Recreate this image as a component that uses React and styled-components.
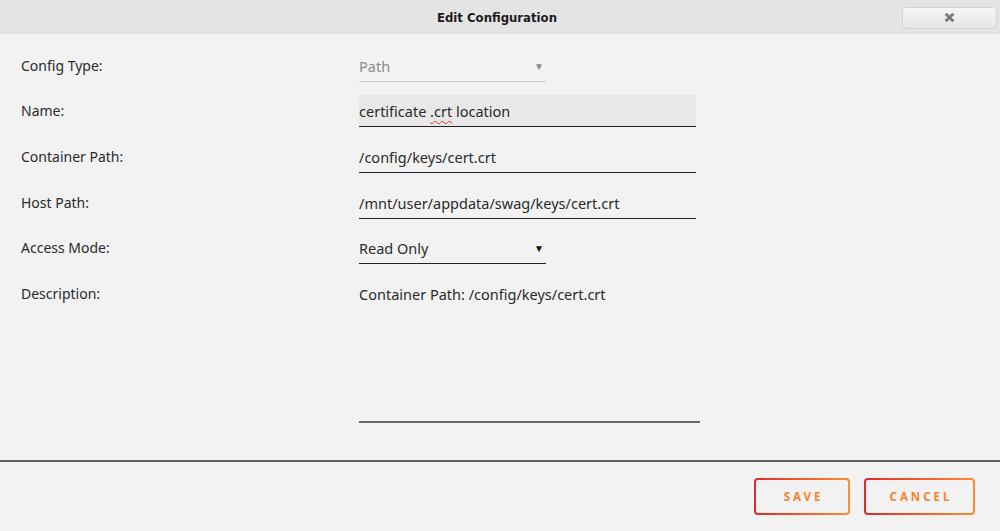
import React from 'react';
import styled, { createGlobalStyle } from 'styled-components';

const GlobalStyle = createGlobalStyle`
  html, body {
    margin: 0;
    padding: 0;
    background: #f2f2f2;
  }
  body {
    font-family: "Noto Sans", "Open Sans", sans-serif;
  }
  * {
    box-sizing: border-box;
  }
`;

const COLORS = {
  page: '#f2f2f2',
  titleBar: '#e4e4e4',
  text: '#2a2a2a',
  muted: '#8a8a8a',
  line: '#222',
  faint: '#c8c8c8',
  red: '#e22828',
  orange: '#ff8c2f'
};

const Dialog = styled.div`
  width: 1000px;
  height: 531px;
  display: flex;
  flex-direction: column;
  background: ${COLORS.page};
  color: ${COLORS.text};
  overflow: hidden;
`;

const TitleBar = styled.div`
  height: 34px;
  flex-shrink: 0;
  display: grid;
  grid-template-columns: 1fr auto 1fr;
  align-items: center;
  background: ${COLORS.titleBar};
`;

const Title = styled.h1`
  grid-column: 2;
  margin: 0 0 0 -6px;
  font-family: "DejaVu Sans Condensed", "DejaVu Sans", sans-serif;
  font-stretch: condensed;
  font-size: 13px;
  font-weight: bold;
  color: #1c1c1c;
`;

const CloseButton = styled.button`
  justify-self: end;
  margin-right: 3px;
  margin-top: 1px;
  width: 95px;
  height: 22px;
  display: flex;
  align-items: center;
  justify-content: center;
  padding: 0;
  border: 1px solid #d4d4d4;
  border-radius: 4px;
  background: linear-gradient(#f6f6f6, #e6e6e6);
  cursor: pointer;
`;

const Body = styled.div`
  flex: 1;
  display: grid;
  grid-template-columns: 338px 1fr;
  grid-auto-rows: 45.6px;
  align-items: center;
  align-content: start;
  padding: 9px 0 0 21px;
`;

const Label = styled.div`
  font-size: 14px;
  line-height: 20px;
  align-self: ${p => (p.$top ? 'start' : 'center')};
  padding-top: ${p => (p.$top ? '13px' : '0')};
`;

const TextInput = styled.div`
  width: ${p => p.$w}px;
  height: 32px;
  font-size: 14.5px;
  line-height: 20px;
  background: ${p => (p.$filled ? '#e8e8e8' : 'transparent')};
  border-bottom: 1px solid ${p => (p.$disabled ? COLORS.faint : COLORS.line)};
  color: ${p => (p.$disabled ? COLORS.muted : COLORS.text)};
  display: flex;
  justify-content: space-between;
  align-items: center;
  padding-top: 1px;
`;

const Caret = styled.span`
  font-size: 10px;
  line-height: 20px;
  margin-right: 2px;
  color: ${p => (p.$disabled ? '#8a8a8a' : '#111')};
`;

const Squiggle = styled.span`
  text-decoration: underline wavy #e03030;
  text-decoration-thickness: 1px;
  text-underline-offset: 3px;
`;

const DescriptionField = styled.div`
  grid-row: span 3;
  align-self: start;
  padding-top: 13px;
`;

const Description = styled.div`
  font-size: 14.5px;
  line-height: 20px;
`;

const TextArea = styled.div`
  width: 341px;
  height: 119px;
  border-bottom: 2px solid #666;
`;

const Footer = styled.div`
  height: 71px;
  flex-shrink: 0;
  border-top: 2px solid #5e5e5e;
  display: flex;
  justify-content: flex-end;
  align-items: flex-start;
  gap: 14px;
  padding: 16px 25px 0 0;
`;

const ActionButton = styled.button`
  width: ${p => p.$w}px;
  height: 37px;
  padding: 0;
  border: 2px solid transparent;
  border-radius: 4px;
  background:
    linear-gradient(${COLORS.page}, ${COLORS.page}) padding-box,
    linear-gradient(90deg, ${COLORS.red}, ${COLORS.orange}) border-box;
  font-family: "Noto Sans", sans-serif;
  font-size: 11.5px;
  font-weight: bold;
  letter-spacing: 3px;
  color: #f5842f;
  cursor: pointer;
  text-indent: 3px;
`;

export default function App() {
  return (
    <Dialog>
      <GlobalStyle />
      <TitleBar>
        <Title>Edit Configuration</Title>
        <CloseButton aria-label="Close">
          <svg width="11" height="11" viewBox="0 0 10 10">
            <path d="M1.5 1.5 L8.5 8.5 M8.5 1.5 L1.5 8.5" stroke="#7a7a7a" strokeWidth="2.6" strokeLinecap="butt" />
          </svg>
        </CloseButton>
      </TitleBar>
      <Body>
        <Label>Config Type:</Label>
        <TextInput $w={187} $disabled>
          <span>Path</span>
          <Caret $disabled>▼</Caret>
        </TextInput>

        <Label>Name:</Label>
        <TextInput $w={337} $filled>
          <span>certificate <Squiggle>.crt</Squiggle> location</span>
        </TextInput>

        <Label>Container Path:</Label>
        <TextInput $w={337}>
          <span>/config/keys/cert.crt</span>
        </TextInput>

        <Label>Host Path:</Label>
        <TextInput $w={337}>
          <span>/mnt/user/appdata/swag/keys/cert.crt</span>
        </TextInput>

        <Label>Access Mode:</Label>
        <TextInput $w={187}>
          <span>Read Only</span>
          <Caret>▼</Caret>
        </TextInput>

        <Label $top>Description:</Label>
        <DescriptionField>
          <Description>Container Path: /config/keys/cert.crt</Description>
          <TextArea />
        </DescriptionField>
      </Body>
      <Footer>
        <ActionButton $w={96}>SAVE</ActionButton>
        <ActionButton $w={111}>CANCEL</ActionButton>
      </Footer>
    </Dialog>
  );
}
